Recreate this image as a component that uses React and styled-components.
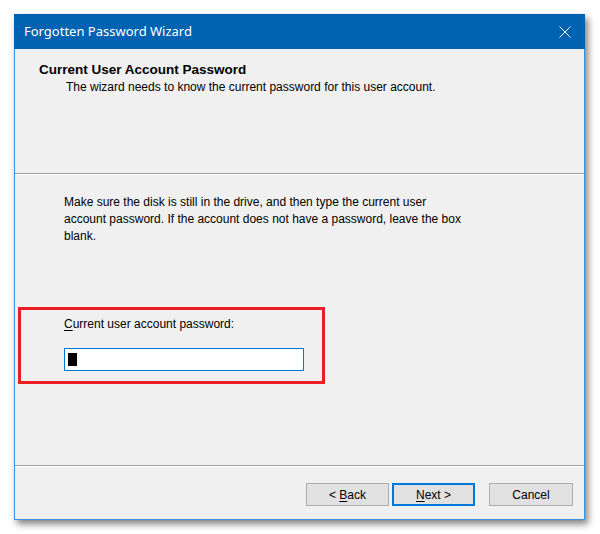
import React from 'react';
import styled, { createGlobalStyle } from 'styled-components';

const GlobalStyle = createGlobalStyle`
  html, body {
    margin: 0;
    padding: 0;
    background: #ffffff;
  }
  body {
    font-family: "Liberation Sans", Arial, sans-serif;
  }
`;

const ACCENT = '#0063b1';
const DIALOG_BG = '#f0f0f0';

const Page = styled.div`
  width: 600px;
  height: 534px;
  padding: 14px 0 0 14px;
  box-sizing: border-box;
`;

const Window = styled.div`
  width: 571px;
  height: 506px;
  display: flex;
  flex-direction: column;
  background: ${DIALOG_BG};
  border: 1px solid #3c8fd9;
  border-top: none;
  box-sizing: border-box;
  box-shadow: 3px 4px 7px rgba(0, 0, 0, 0.5);
`;

const TitleBar = styled.div`
  height: 35px;
  margin: 0 -1px;
  flex: none;
  display: flex;
  align-items: center;
  justify-content: space-between;
  background: ${ACCENT};
  color: #ffffff;
  padding: 0 14px 0 10px;
`;

const TitleText = styled.span`
  font-family: "Noto Sans", "Open Sans", sans-serif;
  font-size: 13px;
  padding-bottom: 1px;
`;

const CloseIcon = () => (
  <svg width="12" height="12" viewBox="0 0 12 12">
    <path d="M0.5 0.5 L11.5 11.5 M11.5 0.5 L0.5 11.5" stroke="#ffffff" strokeWidth="1" fill="none" />
  </svg>
);

const Header = styled.div`
  height: 124px;
  flex: none;
  padding: 12px 0 0 24px;
  box-sizing: border-box;
`;

const Heading = styled.div`
  font-size: 13.5px;
  font-weight: bold;
  line-height: 17px;
  color: #000000;
`;

const SubHeading = styled.div`
  font-size: 12px;
  line-height: 17px;
  color: #000000;
  padding-left: 27px;
  margin-top: 1px;
`;

const Separator = styled.div`
  height: 1px;
  flex: none;
  background: #a0a0a0;
  border-bottom: 1px solid #ffffff;
`;

const Body = styled.div`
  height: 290px;
  flex: none;
  padding-top: 19px;
  box-sizing: border-box;
`;

const Paragraph = styled.p`
  margin: 0 0 0 49px;
  font-size: 12px;
  line-height: 17px;
  color: #000000;
`;

const Highlight = styled.div`
  width: 307px;
  margin: 62px 0 0 3px;
  border: 3px solid #ea1c24;
  box-sizing: border-box;
  padding: 6px 0 10px 43px;
`;

const Label = styled.div`
  font-size: 12px;
  line-height: 17px;
  color: #000000;
`;

const Accel = styled.span`
  text-decoration: underline;
  text-underline-offset: 2px;
`;

const TextBox = styled.div`
  width: 240px;
  height: 23px;
  margin-top: 15px;
  border: 1px solid #0078d7;
  background: #ffffff;
  box-sizing: border-box;
  padding: 4px 0 0 3px;
`;

const Caret = styled.span`
  display: block;
  width: 9px;
  height: 13px;
  background: #000000;
`;

const Footer = styled.div`
  flex: 1;
  display: flex;
  justify-content: flex-end;
  align-items: flex-start;
  padding: 16px 11px 0 0;
`;

const Button = styled.div`
  width: ${p => p.$width || 83}px;
  height: 23px;
  margin-left: ${p => p.$gap || 0}px;
  box-sizing: border-box;
  display: flex;
  align-items: center;
  justify-content: center;
  background: #e1e1e1;
  border: 1px solid ${p => (p.$default ? '#0078d7' : '#adadad')};
  box-shadow: ${p => (p.$default ? 'inset 0 0 0 1px #0078d7' : 'none')};
  font-size: 12px;
  color: #000000;
`;

export default function App() {
  return (
    <>
      <GlobalStyle />
      <Page>
        <Window>
          <TitleBar>
            <TitleText>Forgotten Password Wizard</TitleText>
            <CloseIcon />
          </TitleBar>
          <Header>
            <Heading>Current User Account Password</Heading>
            <SubHeading>The wizard needs to know the current password for this user account.</SubHeading>
          </Header>
          <Separator />
          <Body>
            <Paragraph>
              Make sure the disk is still in the drive, and then type the current user
              <br />
              account password. If the account does not have a password, leave the box
              <br />
              blank.
            </Paragraph>
            <Highlight>
              <Label>
                <Accel>C</Accel>urrent user account password:
              </Label>
              <TextBox>
                <Caret />
              </TextBox>
            </Highlight>
          </Body>
          <Separator />
          <Footer>
            <Button>
              &lt;&nbsp;<Accel>B</Accel>ack
            </Button>
            <Button $gap={3} $default>
              <Accel>N</Accel>ext &gt;
            </Button>
            <Button $gap={14} $width={84}>
              Cancel
            </Button>
          </Footer>
        </Window>
      </Page>
    </>
  );
}
